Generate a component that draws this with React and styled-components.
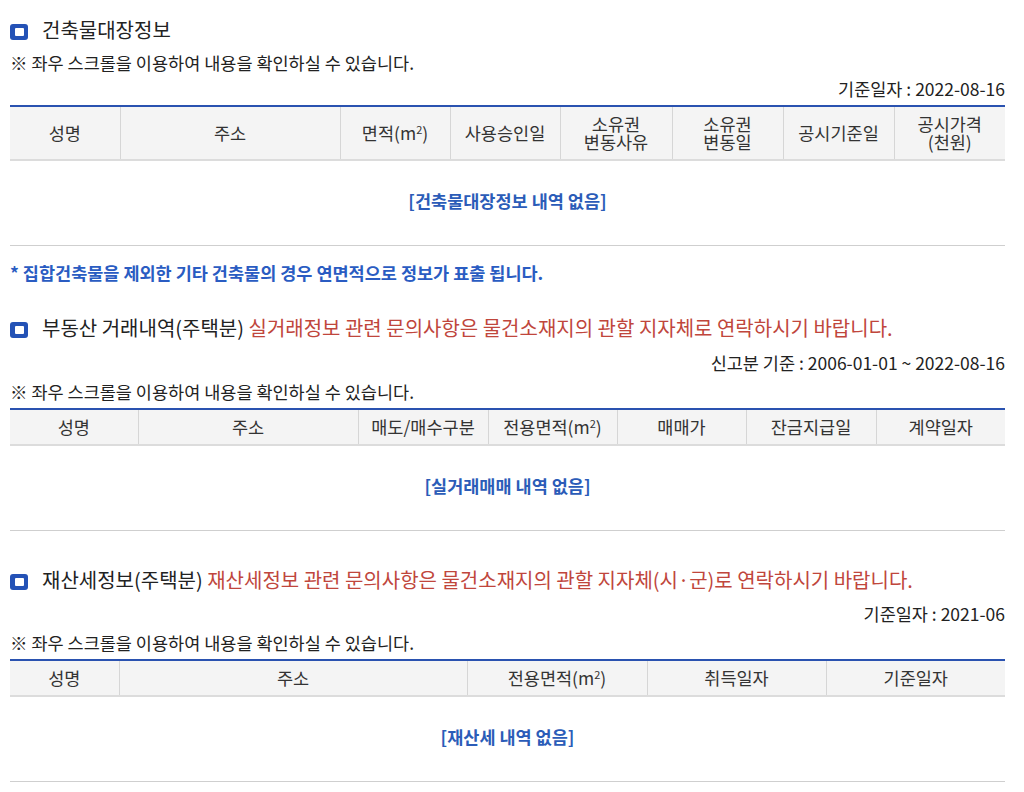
import React from 'react';
import styled, { createGlobalStyle } from 'styled-components';

const GlobalStyle = createGlobalStyle`
  html, body {
    margin: 0;
    padding: 0;
    background: #ffffff;
  }
  body {
    font-family: 'Noto Sans CJK KR', 'Noto Sans', sans-serif;
    color: #222;
  }
`;

const Page = styled.div`
  width: 995px;
  padding: 16px 19px 0 10px;
`;

const Section = styled.section`
  margin-top: ${props => props.$top || 0}px;
`;

const TitleRow = styled.div`
  display: flex;
  align-items: center;
  gap: 14px;
  height: 26px;
`;

const TitleIcon = styled.span`
  flex: none;
  width: 18px;
  height: 16px;
  margin-top: 5px;
  border-radius: 3px;
  background: #2452b6;
  display: flex;
  align-items: center;
  justify-content: center;

  &::after {
    content: '';
    width: 9px;
    height: 8px;
    border-radius: 1px;
    background: #fff;
  }
`;

const TitleText = styled.h2`
  margin: 0;
  font-size: 20px;
  font-weight: 400;
  color: #222;
  white-space: nowrap;
`;

const Warn = styled.span`
  color: #c0463c;
`;

const Guide = styled.p`
  margin: ${props => props.$mt || 0}px 0 0;
  font-size: 17.5px;
  line-height: 22px;
  color: #222;
`;

const BaseDate = styled.p`
  margin: ${props => props.$mt || 0}px 0 0;
  font-size: 17.5px;
  line-height: 22px;
  text-align: right;
  color: #222;
`;

const Table = styled.table`
  width: 100%;
  margin-top: ${props => props.$mt || 0}px;
  border-collapse: collapse;
  table-layout: fixed;
  border-top: 2px solid #2a52b0;
  border-bottom: 1px solid #cfcfcf;
`;

const Col = styled.col`
  width: ${props => props.$w}px;
`;

const HeadCell = styled.th`
  height: ${props => props.$h}px;
  padding: 0 2px;
  background: #f4f4f4;
  border-bottom: 2px solid #dcdcdc;
  border-left: 1px solid #d6d6d6;
  font-size: 17.5px;
  font-weight: 400;
  line-height: 18px;
  color: #333;
  text-align: center;
  vertical-align: middle;
  white-space: nowrap;

  &:first-child {
    border-left: none;
  }

  sup {
    font-size: 11px;
    line-height: 0;
    vertical-align: 6px;
  }
`;

const EmptyCell = styled.td`
  height: 78px;
  padding: 0 0 6px;
  text-align: center;
  vertical-align: middle;
  font-size: 17.5px;
  font-weight: 700;
  color: #2b5cb8;
`;

const Note = styled.p`
  margin: 16px 0 0;
  font-size: 17.5px;
  line-height: 22px;
  font-weight: 700;
  color: #2a5cc2;
`;

const M2 = () => (
  <>
    m<sup>2</sup>
  </>
);

const DataTable = ({ cols, headH, mt, empty }) => (
  <Table $mt={mt}>
    <colgroup>
      {cols.map((c, i) => (
        <Col key={i} $w={c.w} />
      ))}
    </colgroup>
    <thead>
      <tr>
        {cols.map((c, i) => (
          <HeadCell key={i} $h={headH}>
            {c.label}
          </HeadCell>
        ))}
      </tr>
    </thead>
    <tbody>
      <tr>
        <EmptyCell colSpan={cols.length}>{empty}</EmptyCell>
      </tr>
    </tbody>
  </Table>
);

const buildingCols = [
  { w: 110, label: '성명' },
  { w: 220, label: '주소' },
  { w: 110, label: <>면적(<M2 />)</> },
  { w: 110, label: '사용승인일' },
  { w: 112, label: <>소유권<br />변동사유</> },
  { w: 111, label: <>소유권<br />변동일</> },
  { w: 111, label: '공시기준일' },
  { w: 111, label: <>공시가격<br />(천원)</> },
];

const tradeCols = [
  { w: 128, label: '성명' },
  { w: 220, label: '주소' },
  { w: 130, label: '매도/매수구분' },
  { w: 129, label: <>전용면적(<M2 />)</> },
  { w: 129, label: '매매가' },
  { w: 130, label: '잔금지급일' },
  { w: 129, label: '계약일자' },
];

const taxCols = [
  { w: 109, label: '성명' },
  { w: 348, label: '주소' },
  { w: 180, label: <>전용면적(<M2 />)</> },
  { w: 179, label: '취득일자' },
  { w: 179, label: '기준일자' },
];

const GUIDE = '※ 좌우 스크롤을 이용하여 내용을 확인하실 수 있습니다.';

export default function App() {
  return (
    <>
      <GlobalStyle />
      <Page>
        <Section>
          <TitleRow>
            <TitleIcon />
            <TitleText>건축물대장정보</TitleText>
          </TitleRow>
          <Guide $mt={10}>{GUIDE}</Guide>
          <BaseDate $mt={4}>기준일자 : 2022-08-16</BaseDate>
          <DataTable cols={buildingCols} headH={52} mt={5} empty="[건축물대장정보 내역 없음]" />
          <Note>* 집합건축물을 제외한 기타 건축물의 경우 연면적으로 정보가 표출 됩니다.</Note>
        </Section>

        <Section $top={30}>
          <TitleRow>
            <TitleIcon />
            <TitleText>
              부동산 거래내역(주택분) <Warn>실거래정보 관련 문의사항은 물건소재지의 관할 지자체로 연락하시기 바랍니다.</Warn>
            </TitleText>
          </TitleRow>
          <BaseDate $mt={12}>신고분 기준 : 2006-01-01 ~ 2022-08-16</BaseDate>
          <Guide $mt={7}>{GUIDE}</Guide>
          <DataTable cols={tradeCols} headH={34} mt={5} empty="[실거래매매 내역 없음]" />
        </Section>

        <Section $top={35}>
          <TitleRow>
            <TitleIcon />
            <TitleText>
              재산세정보(주택분) <Warn>재산세정보 관련 문의사항은 물건소재지의 관할 지자체(시·군)로 연락하시기 바랍니다.</Warn>
            </TitleText>
          </TitleRow>
          <BaseDate $mt={11}>기준일자 : 2021-06</BaseDate>
          <Guide $mt={7}>{GUIDE}</Guide>
          <DataTable cols={taxCols} headH={34} mt={5} empty="[재산세 내역 없음]" />
        </Section>
      </Page>
    </>
  );
}
